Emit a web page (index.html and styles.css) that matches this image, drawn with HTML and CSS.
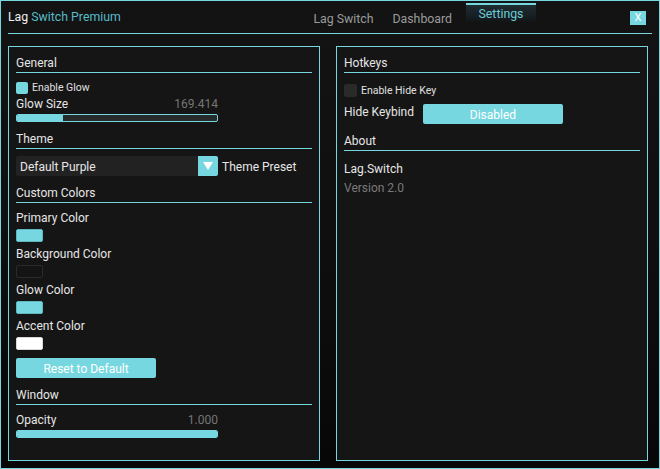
FILE: index.html
```html
<!DOCTYPE html>
<html>
<head>
<meta charset="utf-8">
<link rel="stylesheet" href="styles.css">
</head>
<body>
<div class="window">
  <div class="titlebar">
    <div class="title"><span class="t-white">Lag</span> <span class="t-cyan">Switch Premium</span></div>
    <div class="tabs">
      <div class="tab">Lag Switch</div>
      <div class="tab">Dashboard</div>
      <div class="tab active">Settings</div>
    </div>
    <div class="close">X</div>
  </div>
  <div class="divider"></div>
  <div class="content">
    <div class="panel">
      <div class="section">General</div>
      <div class="check-row first">
        <span class="check on"></span><span class="check-label">Enable Glow</span>
      </div>
      <div class="label-row gap4">
        <span>Glow Size</span><span class="value">169.414</span>
      </div>
      <div class="slider"><div class="fill" style="width: 23%"></div></div>
      <div class="section">Theme</div>
      <div class="dropdown-row">
        <div class="dropdown">
          <span class="dd-text">Default Purple</span>
          <span class="dd-arrow"><svg width="10" height="8" viewBox="0 0 10 8"><path d="M0 0 H10 L5 8 Z" fill="#ffffff"/></svg></span>
        </div>
        <span class="dd-label">Theme Preset</span>
      </div>
      <div class="section">Custom Colors</div>
      <div class="label-row gap8"><span>Primary Color</span></div>
      <div class="swatch cyan"></div>
      <div class="label-row gap5"><span>Background Color</span></div>
      <div class="swatch dark"></div>
      <div class="label-row gap5"><span>Glow Color</span></div>
      <div class="swatch cyan"></div>
      <div class="label-row gap5"><span>Accent Color</span></div>
      <div class="swatch white"></div>
      <div class="button reset">Reset to Default</div>
      <div class="section">Window</div>
      <div class="label-row gap8">
        <span>Opacity</span><span class="value">1.000</span>
      </div>
      <div class="slider"><div class="fill" style="width: 100%"></div></div>
    </div>
    <div class="panel">
      <div class="section">Hotkeys</div>
      <div class="check-row second">
        <span class="check off"></span><span class="check-label">Enable Hide Key</span>
      </div>
      <div class="keybind-row">
        <span class="kb-label">Hide Keybind</span>
        <div class="button keybind">Disabled</div>
      </div>
      <div class="section">About</div>
      <div class="about-name">Lag.Switch</div>
      <div class="about-version">Version 2.0</div>
    </div>
  </div>
</div>
</body>
</html>
```

FILE: styles.css
```css
* { box-sizing: border-box; }
html, body { margin: 0; padding: 0; background: #0a0a0a; }
body { font-family: Roboto, "Noto Sans", sans-serif; color: #e4e4e4; }

.window {
  width: 660px;
  height: 469px;
  border: 1px solid #76d7e0;
  background: linear-gradient(180deg, #131313 0%, #0f0f0f 50%, #070707 100%);
  display: flex;
  flex-direction: column;
}

.titlebar {
  height: 32px;
  display: flex;
  align-items: flex-start;
  padding: 0 13px 0 7px;
}
.title {
  font-size: 12.3px;
  line-height: 16px;
  margin-top: 8px;
  white-space: pre;
}
.t-white { color: #f0f0f0; }
.t-cyan { color: #56bcc8; }

.tabs {
  margin-left: auto;
  display: flex;
  align-items: flex-start;
  height: 100%;
}
.tab {
  font-size: 12.3px;
  line-height: 16px;
  color: #9b9b9b;
  margin-top: 10px;
  margin-left: 19px;
}
.tab.active {
  margin-top: 2px;
  margin-left: 14px;
  width: 70px;
  height: 20px;
  border-top: 2px solid #76d7e0;
  background: linear-gradient(180deg, #1f2c30 0%, #172024 60%, #121212 100%);
  color: #6ccbd6;
  text-align: center;
  line-height: 15px;
  padding-top: 2px;
}
.close {
  margin-left: 94px;
  margin-top: 10px;
  width: 16px;
  height: 14px;
  background: #76d7e0;
  color: #ffffff;
  font-size: 11px;
  line-height: 14px;
  text-align: center;
}

.divider {
  height: 1px;
  margin: 0 7px;
  background: #76d7e0;
}

.content {
  display: flex;
  gap: 16px;
  padding: 12px 11px 0 7px;
  height: 427px;
}
.panel {
  width: 312px;
  height: 415px;
  border: 1px solid #76d7e0;
  background: #151515;
  padding: 5px 7px 0 7px;
  display: flex;
  flex-direction: column;
  align-items: flex-start;
}

.section {
  align-self: stretch;
  height: 21px;
  border-bottom: 1px solid #76d7e0;
  font-size: 12px;
  line-height: 20px;
  padding-top: 1px;
  color: #e6e6e6;
  margin-top: 6px;
}
.section:first-child { margin-top: 0; }

.check-row {
  display: flex;
  align-items: center;
  height: 13px;
}
.check-row.first { margin-top: 8px; }
.check-row.second { margin-top: 11px; }
.check {
  width: 12px;
  height: 12px;
  border-radius: 2px;
  margin-right: 4px;
}
.check.on { background: #76d7e0; }
.check.off { background: #2a2a2a; width: 13px; height: 13px; }
.check-label { font-size: 10.5px; color: #e0e0e0; line-height: 14px; }

.label-row {
  width: 202px;
  display: flex;
  justify-content: space-between;
  font-size: 12px;
  line-height: 15px;
  height: 14px;
  color: #e6e6e6;
}
.gap4 { margin-top: 3px; }
.gap5 { margin-top: 5px; }
.gap8 { margin-top: 8px; }
.value { color: #767676; }

.slider {
  margin-top: 3px;
  width: 202px;
  height: 8px;
  border: 1px solid #76d7e0;
  border-radius: 2px;
  background: #262a2b;
  overflow: hidden;
}
.fill { height: 100%; background: #76d7e0; }

.dropdown-row {
  margin-top: 7px;
  height: 20px;
  display: flex;
  align-items: center;
}
.dropdown {
  width: 202px;
  height: 20px;
  background: #222222;
  display: flex;
  align-items: center;
  border-radius: 2px;
}
.dd-text { font-size: 12px; color: #e6e6e6; padding-left: 4px; flex: 1; line-height: 20px; padding-top: 1px; }
.dd-arrow {
  width: 20px;
  height: 20px;
  background: #76d7e0;
  display: flex;
  align-items: center;
  justify-content: center;
  border-radius: 0 2px 2px 0;
}
.dd-label { font-size: 12px; color: #e6e6e6; margin-left: 4px; line-height: 20px; padding-top: 1px; }

.swatch {
  margin-top: 4px;
  width: 27px;
  height: 13px;
  border-radius: 2px;
}
.swatch.cyan { background: #76d7e0; border: 1px solid #5fb8c1; }
.swatch.dark { background: #141414; border: 1px solid #2a2a2a; }
.swatch.white { background: #ffffff; border: 1px solid #d8d8d8; }

.button {
  background: #76d7e0;
  color: #ffffff;
  font-size: 12px;
  height: 20px;
  line-height: 20px;
  padding-top: 1px;
  text-align: center;
  border-radius: 2px;
}
.button.reset { margin-top: 8px; width: 140px; }
.button.keybind { width: 140px; margin-left: 9px; padding-top: 2px; line-height: 18px; }

.keybind-row {
  margin-top: 7px;
  height: 20px;
  display: flex;
  align-items: center;
}
.kb-label { font-size: 12px; color: #e6e6e6; margin-top: -4px; }

.about-name { margin-top: 11px; font-size: 12px; line-height: 15px; color: #e6e6e6; }
.about-version { margin-top: 4px; font-size: 12px; line-height: 15px; color: #7a7a7a; }
```
